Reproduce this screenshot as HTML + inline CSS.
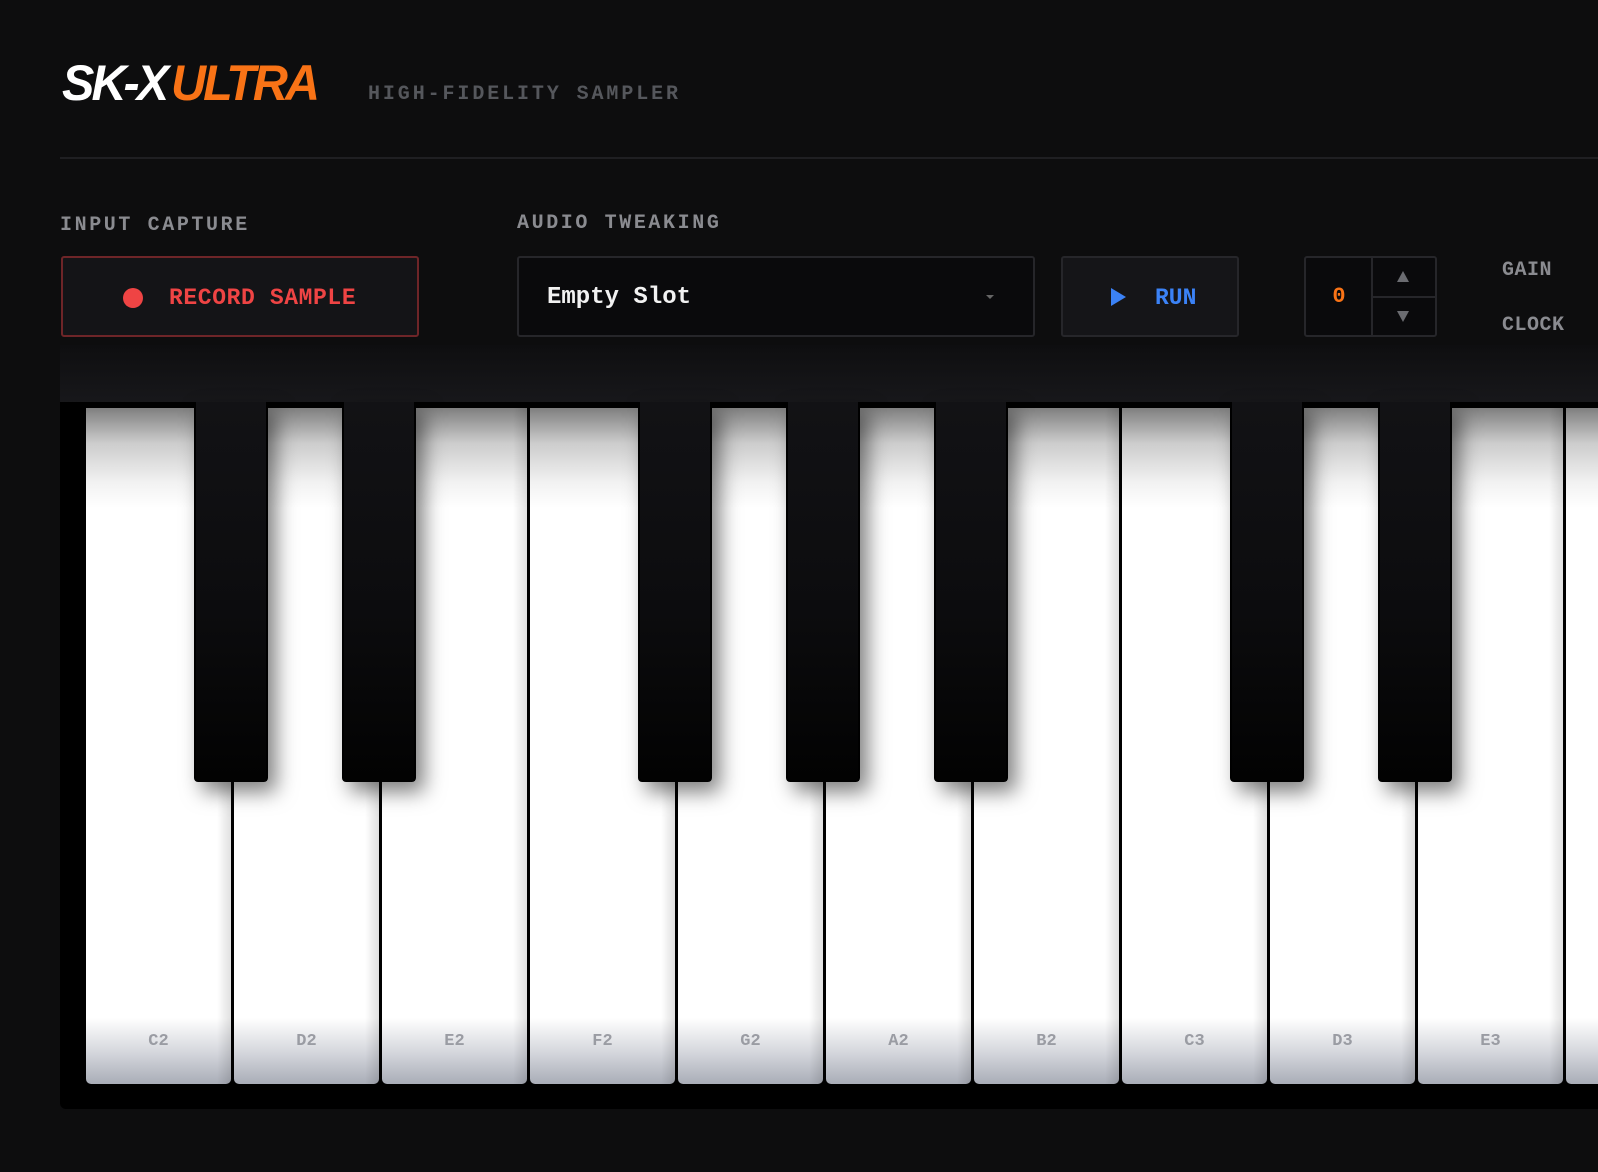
<!DOCTYPE html>
<html><head><meta charset="utf-8"><style>
*{margin:0;padding:0;box-sizing:border-box}
body{width:1598px;height:1172px;background:#0d0d0e;overflow:hidden;position:relative;font-family:"Liberation Mono",monospace}
.abs{position:absolute}
.logo{left:62px;top:54px;font-family:"Liberation Sans",sans-serif;font-weight:700;font-style:italic;font-size:50px;letter-spacing:-3px;color:#fff;white-space:nowrap;transform:scaleX(0.97);transform-origin:left}
.logo span{color:#f97316;margin-left:-6px}
.sub{left:368px;top:83px;font-size:20px;letter-spacing:2.9px;color:#55575c;font-weight:700}
.div{left:60px;right:0;top:157px;height:2px;background:#1f1f22}
.lbl{font-size:20px;letter-spacing:2.6px;color:#8a8b90;font-weight:700}
.panel{left:60px;right:0;top:345px;height:60px;background:linear-gradient(#0e0e10,#18181b)}
.rec{left:61px;top:256px;width:358px;height:81px;border:2px solid #6e2528;border-radius:3px;background:#141417}
.dot{left:60px;top:30px;width:20px;height:20px;border-radius:50%;background:#ef4444}
.rect{left:106px;top:27px;font-size:23px;font-weight:700;color:#ef4444;letter-spacing:0.6px}
.sel{left:517px;top:256px;width:518px;height:81px;border:2px solid #26262a;border-radius:3px;background:#0a0a0c}
.run{left:1061px;top:256px;width:178px;height:81px;border:2px solid #26262a;border-radius:3px;background:#151518}
.step{left:1304px;top:256px;width:133px;height:81px;border:2px solid #26262a;border-radius:3px;background:#0a0a0c}
.kb{left:60px;right:0;top:402px;height:707px;background:#000;border-bottom-left-radius:6px}
.w{position:absolute;top:6px;width:145px;height:676px;border-radius:0 0 5px 5px;
background:linear-gradient(#fff 0,#fff 610px,#d4d6dc 645px,#a9adb7 676px);overflow:hidden}
.w:before{content:"";position:absolute;inset:0;background:linear-gradient(rgba(0,0,0,.5),rgba(0,0,0,.2) 35px,rgba(0,0,0,.05) 75px,rgba(0,0,0,0) 100px)}
.w:after{content:"";position:absolute;top:0;bottom:0;right:0;width:14px;background:linear-gradient(90deg,rgba(0,0,0,0),rgba(0,0,0,.12))}
.w b{position:absolute;left:0;right:0;top:624px;text-align:center;font-size:17px;color:#9a9ca3;font-weight:700}
.k{position:absolute;top:0;width:74px;height:380px;background:linear-gradient(#121215,#0c0c0e 55%,#020202);border:2px solid #000;border-top:none;border-radius:0 0 4px 4px;box-shadow:8px 10px 20px rgba(0,0,0,.5)}
</style></head><body>
<div class="abs logo">SK-X <span>ULTRA</span></div>
<div class="abs sub">HIGH-FIDELITY SAMPLER</div>
<div class="abs div"></div>
<div class="abs lbl" style="left:60px;top:214px">INPUT CAPTURE</div>
<div class="abs lbl" style="left:517px;top:212px">AUDIO TWEAKING</div>
<div class="abs panel"></div>
<div class="abs rec"><div class="abs dot"></div><div class="abs rect">RECORD SAMPLE</div></div>
<div class="abs sel"><div class="abs" style="left:28px;top:26px;font-size:24px;font-weight:700;color:#f2f2f2">Empty Slot</div>
<div class="abs" style="left:467px;top:37px;width:0;height:0;border-left:4px solid transparent;border-right:4px solid transparent;border-top:4px solid #666"></div></div>
<div class="abs run"><div class="abs" style="left:48px;top:30px;width:0;height:0;border-top:9px solid transparent;border-bottom:9px solid transparent;border-left:15px solid #3b82f6"></div>
<div class="abs" style="left:92px;top:27px;font-size:23px;font-weight:700;color:#3b82f6">RUN</div></div>
<div class="abs step"><div class="abs" style="left:0;width:66px;top:26px;text-align:center;font-size:22px;font-weight:700;color:#f97316">0</div>
<div class="abs" style="left:65px;top:0;width:2px;height:77px;background:#26262a"></div>
<div class="abs" style="left:66px;top:38px;width:63px;height:2px;background:#26262a"></div>
<div class="abs" style="left:91px;top:13px;border-left:6px solid transparent;border-right:6px solid transparent;border-bottom:11px solid #6b6c71;width:0;height:0"></div>
<div class="abs" style="left:91px;top:53px;border-left:6px solid transparent;border-right:6px solid transparent;border-top:11px solid #6b6c71;width:0;height:0"></div></div>
<div class="abs lbl" style="left:1502px;top:259px;letter-spacing:0.5px">GAIN</div>
<div class="abs lbl" style="left:1502px;top:314px;letter-spacing:0.5px">CLOCK</div>
<div class="abs kb">
<div class="w" style="left:26px"><b>C2</b></div>
<div class="w" style="left:174px"><b>D2</b></div>
<div class="w" style="left:322px"><b>E2</b></div>
<div class="w" style="left:470px"><b>F2</b></div>
<div class="w" style="left:618px"><b>G2</b></div>
<div class="w" style="left:766px"><b>A2</b></div>
<div class="w" style="left:914px"><b>B2</b></div>
<div class="w" style="left:1062px"><b>C3</b></div>
<div class="w" style="left:1210px"><b>D3</b></div>
<div class="w" style="left:1358px"><b>E3</b></div>
<div class="w" style="left:1506px"><b>F3</b></div>
<div class="k" style="left:134px"></div>
<div class="k" style="left:282px"></div>
<div class="k" style="left:578px"></div>
<div class="k" style="left:726px"></div>
<div class="k" style="left:874px"></div>
<div class="k" style="left:1170px"></div>
<div class="k" style="left:1318px"></div>
</div>
</body></html>
